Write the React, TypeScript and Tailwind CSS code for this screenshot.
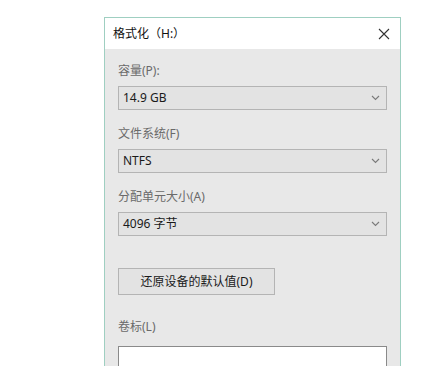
import React from "react"

const font = { fontFamily: '"Noto Sans", "Noto Sans CJK SC", sans-serif' }

const Chevron = () => (
  <svg width="9" height="6" viewBox="0 0 9 6" className="text-[#7a7a7a]">
    <path d="M1 1l3.5 3.5L8 1" fill="none" stroke="currentColor" strokeWidth="1.1" />
  </svg>
)

const Select = ({ value }: { value: string }) => (
  <div className="mt-[7px] h-[24px] flex items-center justify-between border border-[#b4b4b4] bg-[#e3e3e3] pl-[4px] pr-[6px] text-[12px] text-[#1a1a1a]">
    <span>{value}</span>
    <Chevron />
  </div>
)

const Field = ({ label, value }: { label: string; value: string }) => (
  <div className="mb-[16px]">
    <div className="leading-[16px] text-[12px] text-[#6a6a6a]">{label}</div>
    <Select value={value} />
  </div>
)

export default function App() {
  return (
    <div className="h-screen overflow-hidden bg-white pt-[17px] pl-[104px]" style={font}>
      <div className="w-[297px] border border-[#9fcfc1] bg-[#e8e8e8]">
        <div className="h-[31px] bg-white flex items-center justify-between pl-[8px] pr-[10px]">
          <span className="text-[12px] text-[#111]">格式化（H:）</span>
          <svg width="12" height="12" viewBox="0 0 12 12">
            <path d="M1 1l10 10M11 1L1 11" stroke="#333" strokeWidth="1.1" />
          </svg>
        </div>
        <div className="px-[13px] pt-[14px] pb-[20px]">
          <Field label="容量(P):" value="14.9 GB" />
          <Field label="文件系统(F)" value="NTFS" />
          <Field label="分配单元大小(A)" value="4096 字节" />
          <button className="mt-[32px] w-[157px] h-[27px] border border-[#b4b4b4] bg-[#e3e3e3] text-[12px] text-[#1a1a1a] flex items-center justify-center">
            还原设备的默认值(D)
          </button>
          <div className="mt-[24px] leading-[16px] text-[12px] text-[#6a6a6a]">卷标(L)</div>
          <div className="mt-[11px] h-[24px] border border-[#8a8a8a] bg-white" />
        </div>
      </div>
    </div>
  )
}
